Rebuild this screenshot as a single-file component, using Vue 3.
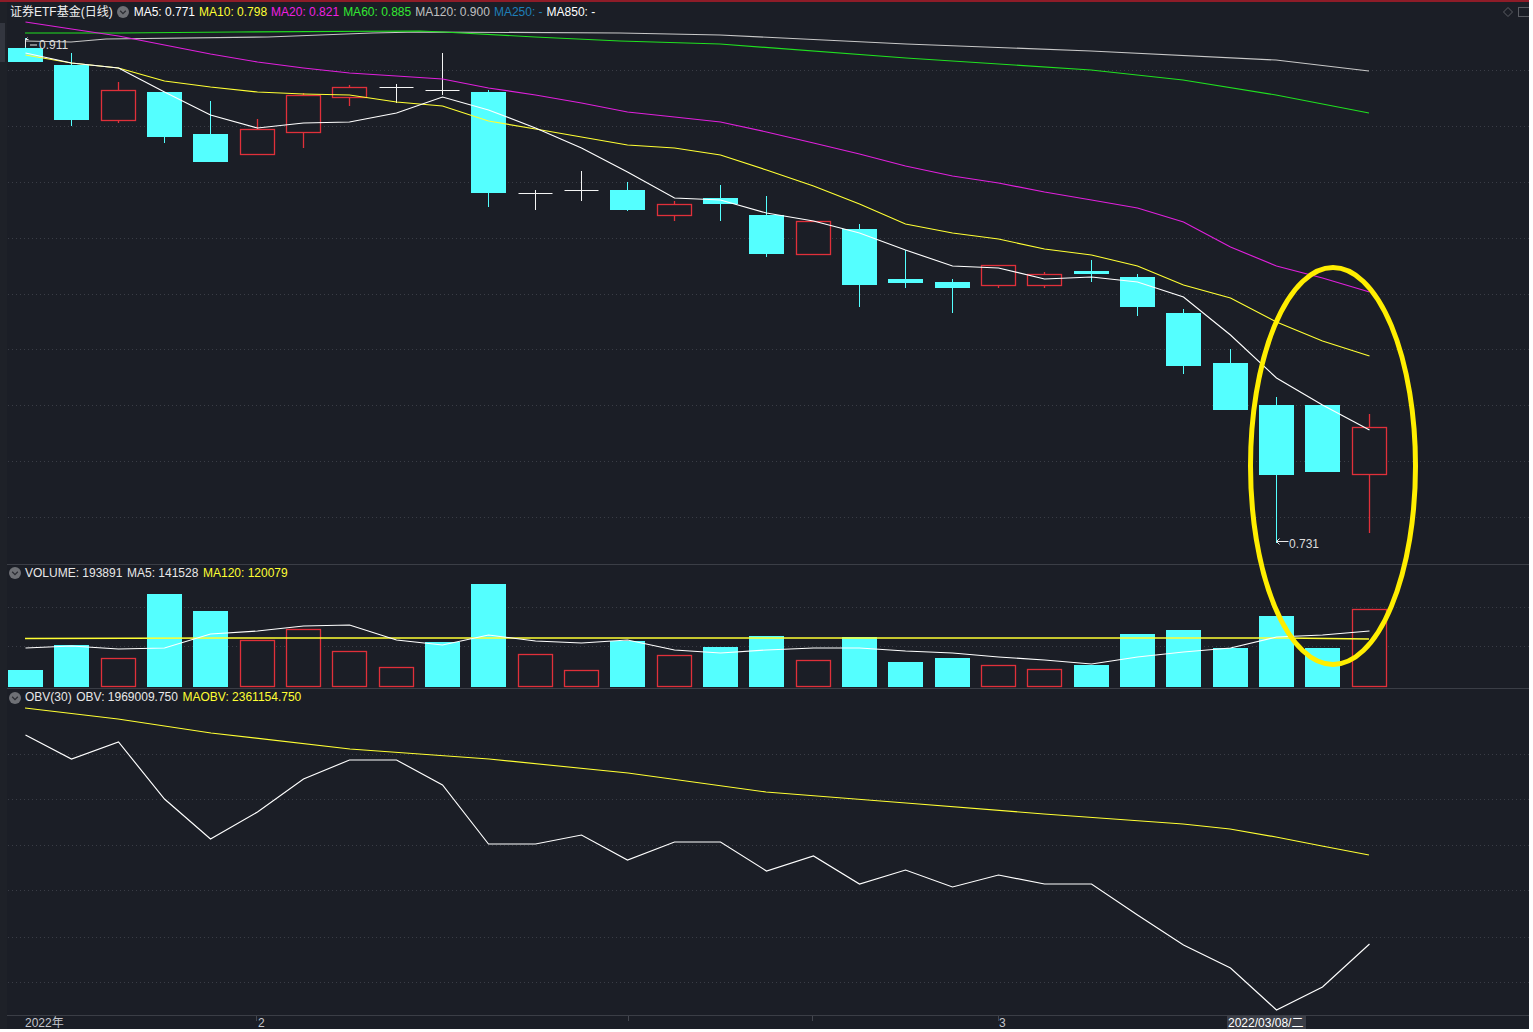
<template>
  <div class="terminal">
    <div class="strip"><div class="thumb"></div></div>
    <div class="charts">
      <!-- K线 -->
      <section class="panel main-panel">
        <div class="legend title-row">
          <span class="name">证券ETF基金(日线)</span>
          <svg class="toggle" viewBox="0 0 12 12"><circle cx="6" cy="6" r="6" fill="#6e7075" /><path d="M3.2 4.8 6 7.6l2.8-2.8" fill="none" stroke="#2b2d33" stroke-width="1.3" /></svg>
          <span v-for="m in maLegend" :key="m.label" :style="{ color: m.color }">{{ m.label }}</span>
          <svg class="corner" viewBox="0 0 29 12">
            <path d="M8 1.5 12.5 6 8 10.5 3.5 6Z" fill="none" stroke="#5a5c62" />
            <rect x="18.5" y="1.5" width="14" height="9" fill="none" stroke="#5a5c62" />
          </svg>
        </div>
        <svg class="chart" width="1522" height="543" viewBox="7 21 1522 543">
          <line v-for="y in mainGrid" :key="y" class="grid" x1="8" x2="1529" :y1="y + 0.5" :y2="y + 0.5" />
          <g v-for="(c, i) in candles" :key="i">
            <line :class="c.kind" :x1="xAt(i)" :x2="xAt(i)" :y1="c.high" :y2="c.low" />
            <line v-if="c.kind === 'doji'" class="doji" :x1="xAt(i) - 17" :x2="xAt(i) + 17" :y1="c.top + 0.5" :y2="c.top + 0.5" />
            <rect v-else-if="c.kind === 'down'" class="down" :x="xAt(i) - 17.5" :y="c.top" width="35" :height="c.bottom - c.top" />
            <rect v-else class="up" :x="xAt(i) - 17" :y="c.top + 0.5" width="34" :height="c.bottom - c.top - 1" />
          </g>
          <polyline v-for="l in mainLines" :key="l.color" class="trend" :stroke="l.color" :points="l.points" />
          <path class="mark" d="M25.5 47V39.5h3M25.5 39.5l2-2" />
          <path class="mark" d="M30 45h7" />
          <text class="note" x="39" y="49">0.911</text>
          <path class="mark" d="M1276.5 541.5h12M1276.5 541.5l3-3M1276.5 541.5l3 3" />
          <text class="note" x="1289" y="548">0.731</text>
        </svg>
      </section>

      <!-- 成交量 -->
      <section class="panel volume-panel">
        <div class="legend sub-row">
          <svg class="toggle first" viewBox="0 0 12 12"><circle cx="6" cy="6" r="6" fill="#6e7075" /><path d="M3.2 4.8 6 7.6l2.8-2.8" fill="none" stroke="#2b2d33" stroke-width="1.3" /></svg>
          <span class="white">VOLUME: 193891</span>
          <span class="white">MA5: 141528</span>
          <span class="yellow">MA120: 120079</span>
        </div>
        <svg class="chart" width="1522" height="107" viewBox="7 581 1522 107">
          <line v-for="y in [607, 646]" :key="y" class="grid" x1="8" x2="1529" :y1="y + 0.5" :y2="y + 0.5" />
          <template v-for="(b, i) in volumes" :key="i">
            <rect v-if="b.up" class="up" :x="xAt(i) - 17" :y="b.top + 0.5" width="34" :height="686 - b.top" />
            <rect v-else class="down" :x="xAt(i) - 17.5" :y="b.top" width="35" :height="687 - b.top" />
          </template>
          <polyline v-for="l in volumeLines" :key="l.color" class="trend" :class="l.extra" :stroke="l.color" :points="l.points" />
        </svg>
      </section>

      <!-- OBV -->
      <section class="panel obv-panel">
        <div class="legend">
          <svg class="toggle first" viewBox="0 0 12 12"><circle cx="6" cy="6" r="6" fill="#6e7075" /><path d="M3.2 4.8 6 7.6l2.8-2.8" fill="none" stroke="#2b2d33" stroke-width="1.3" /></svg>
          <span class="white">OBV(30)</span>
          <span class="white">OBV: 1969009.750</span>
          <span class="yellow">MAOBV: 2361154.750</span>
        </div>
        <svg class="chart" width="1522" height="309" viewBox="7 706 1522 309">
          <line v-for="y in obvGrid" :key="y" class="grid" x1="8" x2="1529" :y1="y + 0.5" :y2="y + 0.5" />
          <polyline v-for="l in obvLines" :key="l.color" class="trend" :stroke="l.color" :points="l.points" />
        </svg>
      </section>

      <!-- 时间轴 -->
      <svg class="axis" width="1522" height="13" viewBox="7 1016 1522 13">
        <line v-for="x in [256, 628, 812, 998]" :key="x" class="tick" :x1="x + 0.5" :x2="x + 0.5" y1="1016" y2="1021" />
        <rect x="1227" y="1016" width="79" height="13" fill="#3a3d46" />
        <text x="25" y="1027">2022年</text>
        <text x="258" y="1027">2</text>
        <text x="999" y="1027">3</text>
        <text class="current" x="1228" y="1027">2022/03/08/二</text>
      </svg>
    </div>

    <!-- 手绘的黄色圈 -->
    <svg class="circle-mark" width="180" height="412" viewBox="1243 260 180 412">
      <ellipse cx="1333" cy="466" rx="82.5" ry="198.5" fill="none" stroke="#ffee00" stroke-width="5" />
    </svg>
  </div>
</template>

<script setup>
const xAt = (i) => Math.round(25 + i * 46.33) + 0.5

const toPoints = (ys) => ys.map((y, i) => `${xAt(i)},${y}`).join(" ")
const toPointsXY = (pts) => pts.map((p) => p.join(",")).join(" ")

const maLegend = [
  { label: "MA5: 0.771", color: "#ffffff" },
  { label: "MA10: 0.798", color: "#ffff33" },
  { label: "MA20: 0.821", color: "#f020e0" },
  { label: "MA60: 0.885", color: "#33e833" },
  { label: "MA120: 0.900", color: "#c0c0c0" },
  { label: "MA250: -", color: "#1f7fb8" },
  { label: "MA850: -", color: "#ffffff" },
]

const mainGrid = [70, 126, 182, 238, 294, 349, 405, 461, 517]
const obvGrid = [754, 799, 845, 890, 937, 982]

// top, bottom, high, low
const rows = [
  ["down", 48, 62, 38, 62],
  ["down", 65, 120, 53, 126],
  ["up", 90, 121, 82, 123],
  ["down", 92, 137, 92, 143],
  ["down", 134, 162, 101, 162],
  ["up", 129, 155, 119, 155],
  ["up", 95, 133, 93, 148],
  ["up", 87, 98, 85, 106],
  ["doji", 87, 87, 84, 103],
  ["doji", 90, 90, 53, 95],
  ["down", 92, 193, 90, 207],
  ["doji", 193, 193, 190, 210],
  ["doji", 190, 190, 171, 201],
  ["down", 190, 210, 182, 211],
  ["up", 204, 216, 201, 221],
  ["down", 198, 204, 185, 221],
  ["down", 215, 254, 196, 257],
  ["up", 221, 255, 221, 255],
  ["down", 229, 285, 224, 307],
  ["down", 279, 283, 250, 288],
  ["down", 282, 288, 279, 313],
  ["up", 265, 286, 265, 288],
  ["up", 274, 286, 272, 288],
  ["down", 271, 274, 260, 282],
  ["down", 277, 307, 274, 316],
  ["down", 313, 366, 309, 374],
  ["down", 363, 410, 349, 410],
  ["down", 405, 475, 397, 543],
  ["down", 405, 472, 405, 472],
  ["up", 427, 475, 414, 533],
]
const candles = rows.map(([kind, top, bottom, high, low]) => ({ kind, top, bottom, high, low }))

const ma5 = [53, 63, 68, 92, 115, 128, 123, 122, 113, 97, 110, 128, 148, 172, 198, 200, 213, 221, 233, 250, 266, 268, 279, 277, 282, 297, 335, 378, 405, 430]
const ma10 = [55, 63, 68, 81, 87, 92, 94, 95, 102, 106, 121, 129, 137, 145, 148, 155, 170, 186, 204, 224, 233, 239, 249, 255, 266, 285, 298, 322, 341, 356]
const ma20 = [22, 29, 36, 45, 54, 62, 68, 73, 76, 79, 88, 95, 103, 112, 117, 122, 132, 143, 154, 166, 176, 183, 192, 200, 208, 222, 247, 266, 278, 292]

const mainLines = [
  {
    color: "#c8c8c8",
    points: toPointsXY([[25, 41], [71, 42], [106, 39], [268, 37], [372, 33], [419, 32], [620, 33], [720, 35], [906, 44], [1091, 51], [1276, 60], [1369, 71]]),
  },
  {
    color: "#20e020",
    points: toPointsXY([[25, 33], [118, 33], [235, 32], [420, 31], [443, 32], [535, 37], [620, 41], [720, 44], [906, 58], [1091, 70], [1183, 80], [1276, 95], [1369, 113]]),
  },
  { color: "#e020dc", points: toPoints(ma20) },
  { color: "#ffff33", points: toPoints(ma10) },
  { color: "#ffffff", points: toPoints(ma5) },
]

const volTops = [670, 645, 658, 594, 611, 640, 629, 651, 667, 642, 584, 654, 670, 641, 655, 647, 636, 660, 637, 662, 658, 665, 669, 665, 634, 630, 648, 616, 648, 609]
const upBars = [2, 5, 6, 7, 8, 11, 12, 14, 17, 21, 22, 29]
const volumes = volTops.map((top, i) => ({ top, up: upBars.includes(i) }))

const volMa5 = [648, 646, 649, 648, 634, 631, 626, 625, 640, 645, 635, 641, 643, 640, 650, 653, 650, 648, 648, 651, 653, 657, 660, 664, 657, 652, 648, 637, 635, 631]

const volumeLines = [
  { color: "#ffff33", extra: "flat", points: toPointsXY([[25, 638.5], [230, 638], [1285, 638], [1369, 639]]) },
  { color: "#ffffff", extra: "", points: toPoints(volMa5) },
]

const obv = [735, 759, 742, 799, 839, 812, 779, 760, 760, 785, 844, 844, 835, 860, 842, 842, 871, 856, 884, 870, 887, 875, 884, 884, 915, 945, 968, 1010, 987, 944]

const obvLines = [
  { color: "#ffffff", points: toPoints(obv) },
  {
    color: "#ffff33",
    points: toPointsXY([[25, 708], [118, 719], [211, 733], [350, 749], [489, 759], [628, 773], [766, 792], [906, 803], [1044, 814], [1183, 824], [1230, 829], [1276, 837], [1322, 846], [1369, 855]]),
  },
]
</script>

<style scoped>
.terminal {
  position: relative;
  display: flex;
  width: 1529px;
  height: 1029px;
  overflow: hidden;
  border-top: 2px solid #8e1c28;
  box-sizing: border-box;
  background: #1b1e26;
  font-family: "Liberation Sans", "Noto Sans CJK SC", sans-serif;
  font-size: 12px;
  color: #fff;
}
.strip {
  width: 7px;
  flex-shrink: 0;
  padding-top: 21px;
  background: #1e2128;
}
.thumb {
  width: 5px;
  height: 39px;
  background: #33363f;
}
.charts {
  display: flex;
  flex-direction: column;
  width: 1522px;
}
.panel {
  display: flex;
  flex-direction: column;
  border-bottom: 1px solid #3b3e46;
}
.legend {
  display: flex;
  align-items: center;
  gap: 4.6px;
  height: 17px;
  line-height: 17px;
  padding-left: 2px;
  white-space: nowrap;
}
.title-row {
  gap: 4px;
  height: 19px;
  padding-top: 1px;
  padding-left: 3px;
  box-sizing: border-box;
}
.sub-row {
  height: 16px;
}
.name {
  margin-right: 0.6px;
  color: #f0f0f0;
}
.toggle {
  width: 12px;
  height: 12px;
  flex-shrink: 0;
  margin-right: 0.4px;
}
.toggle.first {
  margin-right: -0.6px;
}
.corner {
  width: 29px;
  height: 12px;
  margin-left: auto;
}
.white {
  color: #e8e8e8;
}
.yellow {
  color: #ffff33;
}
.chart,
.axis {
  display: block;
}
.axis text {
  fill: #c4c6cc;
  font-size: 12px;
}
.axis text.current {
  fill: #fff;
}
.tick {
  stroke: #44474f;
}
.grid {
  stroke: #3a3d46;
  stroke-dasharray: 1 3;
}
.trend {
  fill: none;
  stroke-width: 1.15;
}
.trend.flat {
  stroke-width: 1.5;
}
rect.down {
  fill: #54ffff;
}
rect.up {
  fill: #1b1e26;
  stroke: #e0303a;
  stroke-width: 1.3;
}
line.down {
  stroke: #54ffff;
}
line.up {
  stroke: #e0303a;
  stroke-width: 1.3;
}
line.doji {
  stroke: #f4f4f4;
}
.mark {
  fill: none;
  stroke: #e8e8e8;
}
.note {
  fill: #dcdcdc;
  font-size: 12px;
}
.circle-mark {
  position: absolute;
  left: 1243px;
  top: 258px;
}
</style>
